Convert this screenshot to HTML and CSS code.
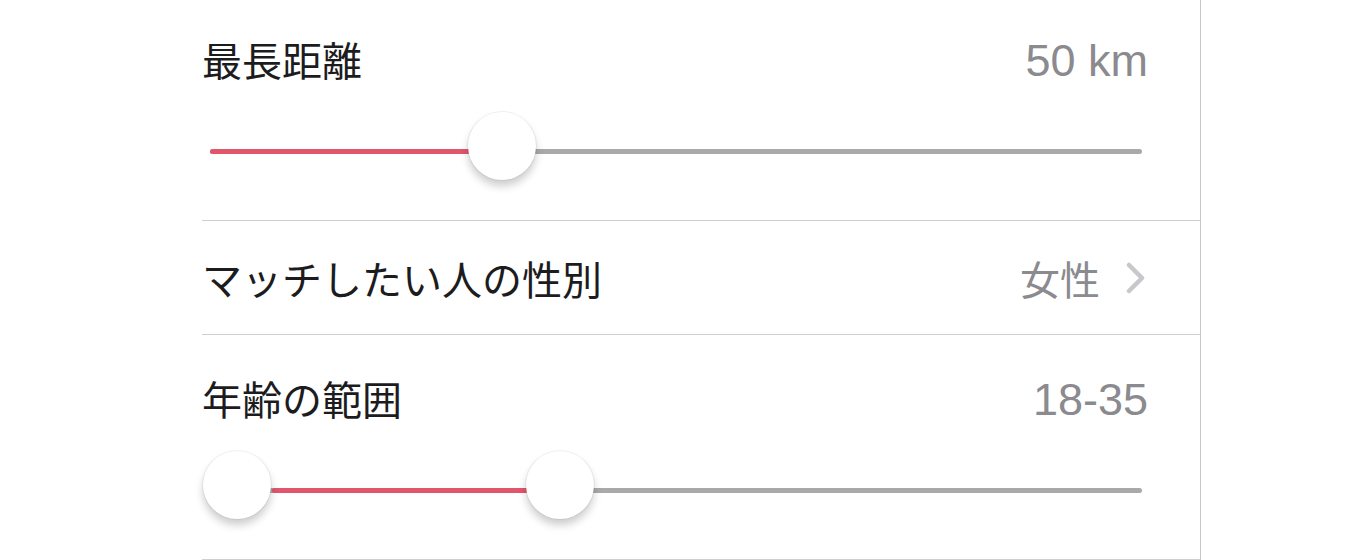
FILE: index.html
```html
<!DOCTYPE html>
<html lang="ja">
<head>
<meta charset="utf-8">
<title>設定</title>
<link rel="stylesheet" href="styles.css">
</head>
<body>
<div class="list">
  <section class="row row-slider">
    <div class="row-head">
      <span class="label">最長距離</span>
      <span class="value">50 km</span>
    </div>
    <div class="slider">
      <div class="track"></div>
      <div class="fill" style="left: 8px; width: 262px;"></div>
      <div class="thumb" style="left: 266px;"></div>
    </div>
  </section>
  <section class="row row-link">
    <span class="label">マッチしたい人の性別</span>
    <span class="link-value">
      <span class="value-jp">女性</span>
      <svg class="chevron" width="20" height="32" viewBox="0 0 20 32" aria-hidden="true">
        <path d="M3 3 L16 16 L3 29" fill="none" stroke="#c7c7cc" stroke-width="4.5" stroke-linecap="round" stroke-linejoin="round"/>
      </svg>
    </span>
  </section>
  <section class="row row-slider">
    <div class="row-head">
      <span class="label">年齢の範囲</span>
      <span class="value">18-35</span>
    </div>
    <div class="slider">
      <div class="track"></div>
      <div class="fill" style="left: 70px; width: 256px;"></div>
      <div class="thumb" style="left: 1px;"></div>
      <div class="thumb" style="left: 324px;"></div>
    </div>
  </section>
</div>
</body>
</html>
```

FILE: styles.css
```css
html, body {
  margin: 0;
  padding: 0;
  background: #ffffff;
  overflow: hidden;
}

.list {
  box-sizing: border-box;
  margin-left: 202px;
  margin-top: -4px;
  width: 999px;
  height: 564px;
  border-right: 1px solid #c8c8cc;
  display: flex;
  flex-direction: column;
}

.row {
  box-sizing: border-box;
  border-bottom: 1px solid #cfcfd2;
  padding-right: 52px;
  flex: none;
}

.row-slider {
  height: 225px;
  padding-top: 39px;
}

.row-head {
  display: flex;
  justify-content: space-between;
  align-items: baseline;
  height: 50px;
}

.label {
  font-family: "Noto Sans CJK JP", "Noto Sans", sans-serif;
  font-size: 40px;
  line-height: 48px;
  color: #1c1c1e;
}

.value {
  font-family: "Liberation Sans", Arial, sans-serif;
  font-size: 45px;
  line-height: 48px;
  color: #8a8a8f;
}

.slider {
  position: relative;
  height: 70px;
  margin-top: 31px;
}

.track {
  position: absolute;
  left: 8px;
  right: 6px;
  top: 33px;
  height: 5px;
  border-radius: 3px;
  background: #a9a9ab;
}

.fill {
  position: absolute;
  top: 33px;
  height: 5px;
  border-radius: 3px;
  background: #e2566c;
}

.thumb {
  position: absolute;
  top: -4px;
  width: 68px;
  height: 68px;
  border-radius: 50%;
  background: #ffffff;
  box-shadow: 0 0 0 1px rgba(0, 0, 0, 0.05), 0 6px 8px rgba(0, 0, 0, 0.2);
}

.row-link {
  height: 114px;
  display: flex;
  align-items: center;
  justify-content: space-between;
  padding-right: 54px;
}

.link-value {
  display: flex;
  align-items: center;
  gap: 26px;
}

.value-jp {
  font-family: "Noto Sans CJK JP", "Noto Sans", sans-serif;
  font-size: 40px;
  line-height: 48px;
  color: #8a8a8f;
}

.chevron {
  display: block;
}
```
